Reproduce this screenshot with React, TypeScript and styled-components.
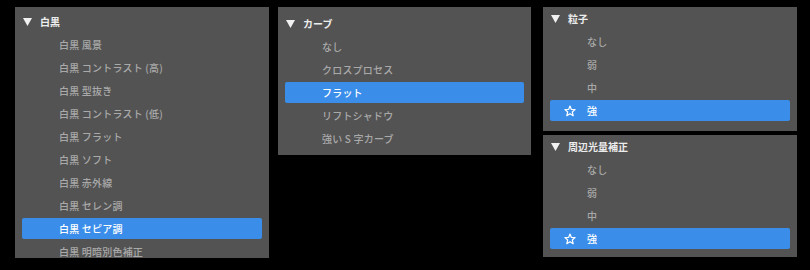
import React from "react";
import styled, { createGlobalStyle } from "styled-components";

const GlobalStyle = createGlobalStyle`
  html, body {
    margin: 0;
    padding: 0;
    background: #000000;
  }
  body {
    font-family: "Noto Sans CJK JP", "Noto Sans", sans-serif;
  }
`;

interface IGroup {
  title: string;
  items: string[];
  active: number;
  starred?: boolean;
}

const Page = styled.div`
  display: flex;
  align-items: flex-start;
  gap: 9px;
  padding: 7px 0 0 15px;
  width: 810px;
  height: 270px;
  box-sizing: border-box;
  background: #000000;
`;

const Column = styled.div<{ $shift?: number }>`
  display: flex;
  flex-direction: column;
  gap: 4px;
  margin-left: ${(p) => p.$shift || 0}px;
`;

const Panel = styled.div<{ $width: number; $height: number; $top: number }>`
  display: flex;
  flex-direction: column;
  flex-shrink: 0;
  width: ${(p) => p.$width}px;
  height: ${(p) => p.$height}px;
  box-sizing: border-box;
  padding: ${(p) => p.$top}px 7px 0 7px;
  background: #535353;
  overflow: hidden;
`;

const Header = styled.div`
  display: flex;
  align-items: center;
  flex-shrink: 0;
  height: 23px;
  padding-left: 1px;
  font-size: 10px;
  font-weight: 700;
  line-height: 1;
  color: #ececec;
`;

const Caret = styled.svg`
  width: 9px;
  height: 8px;
  margin-right: 8px;
  flex-shrink: 0;
`;

const Row = styled.div<{ $active?: boolean }>`
  display: flex;
  align-items: center;
  flex-shrink: 0;
  height: 21px;
  margin: 1px 0;
  padding-left: 14px;
  border-radius: 2px;
  font-size: 10px;
  font-weight: 500;
  line-height: 1;
  color: ${(p) => (p.$active ? "#ffffff" : "#a9a9a9")};
  background: ${(p) => (p.$active ? "#3a8eea" : "transparent")};
`;

const IconSlot = styled.span`
  display: flex;
  align-items: center;
  width: 23px;
  flex-shrink: 0;
`;

const Label = styled.span`
  white-space: nowrap;
  letter-spacing: 0.2px;
`;

const DownCaret = () => (
  <Caret viewBox="0 0 9 8">
    <polygon points="0,0 9,0 4.5,8" fill="#f2f2f2" />
  </Caret>
);

const Star = () => (
  <svg width="12" height="12" viewBox="0 0 12 12">
    <polygon
      points="6,1 7.4,4.4 11.1,4.6 8.3,7 9.2,10.7 6,8.7 2.8,10.7 3.7,7 0.9,4.6 4.6,4.4"
      fill="none"
      stroke="#ffffff"
      strokeWidth="1.2"
      strokeLinejoin="round"
    />
  </svg>
);

const GroupList: React.FC<{ group: IGroup }> = ({ group }) => (
  <>
    <Header>
      <DownCaret />
      {group.title}
    </Header>
    {group.items.map((item, i) => {
      const active = i === group.active;
      return (
        <Row key={item} $active={active}>
          <IconSlot>{active && group.starred ? <Star /> : null}</IconSlot>
          <Label>{item}</Label>
        </Row>
      );
    })}
  </>
);

const monochrome: IGroup = {
  title: "白黒",
  items: [
    "白黒 風景",
    "白黒 コントラスト (高)",
    "白黒 型抜き",
    "白黒 コントラスト (低)",
    "白黒 フラット",
    "白黒 ソフト",
    "白黒 赤外線",
    "白黒 セレン調",
    "白黒 セピア調",
    "白黒 明暗別色補正",
  ],
  active: 8,
};

const curve: IGroup = {
  title: "カーブ",
  items: ["なし", "クロスプロセス", "フラット", "リフトシャドウ", "強い S 字カーブ"],
  active: 2,
};

const grain: IGroup = {
  title: "粒子",
  items: ["なし", "弱", "中", "強"],
  active: 3,
  starred: true,
};

const vignette: IGroup = {
  title: "周辺光量補正",
  items: ["なし", "弱", "中", "強"],
  active: 3,
  starred: true,
};

export default function App() {
  return (
    <>
      <GlobalStyle />
      <Page>
        <Panel $width={254} $height={251} $top={3}>
          <GroupList group={monochrome} />
        </Panel>
        <Panel $width={253} $height={148} $top={5}>
          <GroupList group={curve} />
        </Panel>
        <Column $shift={3}>
          <Panel $width={254} $height={124} $top={0}>
            <GroupList group={grain} />
          </Panel>
          <Panel $width={254} $height={122} $top={0}>
            <GroupList group={vignette} />
          </Panel>
        </Column>
      </Page>
    </>
  );
}
